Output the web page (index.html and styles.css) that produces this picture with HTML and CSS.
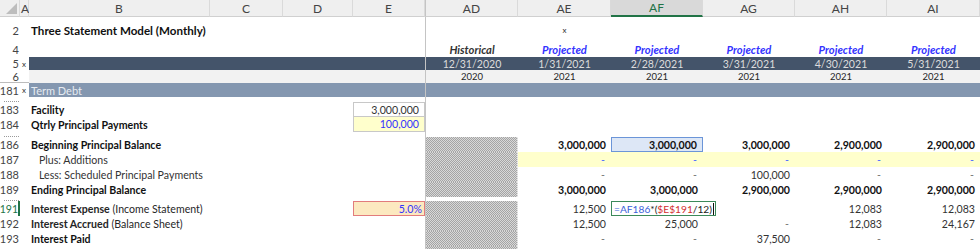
FILE: index.html
```html
<!DOCTYPE html>
<html lang="en">
<head>
  <meta charset="UTF-8" />
  <title>Three Statement Model (Monthly)</title>
  <link rel="stylesheet" href="styles.css">
</head>
<body>

<div class="sheet">

  <!-- Column headers -->
  <div class="row hdr">
    <div class="corner"><span class="tri"></span></div>
    <div class="ch left">A</div>
    <div class="ch">B</div>
    <div class="ch">C</div>
    <div class="ch">D</div>
    <div class="ch">E</div>
    <div class="ch fz">AD</div>
    <div class="ch">AE</div>
    <div class="ch sel">AF</div>
    <div class="ch">AG</div>
    <div class="ch">AH</div>
    <div class="ch">AI</div>
  </div>

  <div class="row r2">
    <div class="rh">2</div>
    <div></div>
    <div class="title">Three Statement Model (Monthly)</div>
    <div></div><div></div><div></div>
    <div class="fz"></div>
    <div class="mid mark">x</div>
    <div></div><div></div><div></div><div></div>
  </div>

  <div class="row r3">
    <div class="rh"></div>
    <div></div><div></div><div></div><div></div><div></div>
    <div class="fz"></div>
    <div></div><div></div><div></div><div></div><div></div>
  </div>

  <div class="row r4">
    <div class="rh">4</div>
    <div></div><div></div><div></div><div></div><div></div>
    <div class="fz mid hist">Historical</div>
    <div class="mid proj">Projected</div>
    <div class="mid proj">Projected</div>
    <div class="mid proj">Projected</div>
    <div class="mid proj">Projected</div>
    <div class="mid proj">Projected</div>
  </div>

  <div class="row r5">
    <div class="rh">5</div>
    <div class="mark">x</div>
    <div class="band"></div><div class="band"></div><div class="band"></div><div class="band"></div>
    <div class="fz band mid date">12/31/2020</div>
    <div class="band mid date">1/31/2021</div>
    <div class="band mid date">2/28/2021</div>
    <div class="band mid date">3/31/2021</div>
    <div class="band mid date">4/30/2021</div>
    <div class="band mid date">5/31/2021</div>
  </div>

  <div class="row r6">
    <div class="rh">6</div>
    <div></div>
    <div class="grey"></div><div class="grey"></div><div class="grey"></div><div class="grey"></div>
    <div class="fz grey mid">2020</div>
    <div class="grey mid">2021</div>
    <div class="grey mid">2021</div>
    <div class="grey mid">2021</div>
    <div class="grey mid">2021</div>
    <div class="grey mid">2021</div>
  </div>

  <div class="row r181">
    <div class="rh">181</div>
    <div class="mark">x</div>
    <div class="section">Term Debt</div>
    <div class="section"></div><div class="section"></div><div class="section"></div>
    <div class="fz section"></div>
    <div class="section"></div><div class="section"></div><div class="section"></div><div class="section"></div><div class="section"></div>
  </div>

  <div class="row thin">
    <div class="rh"><span class="stub"></span></div>
    <div></div><div></div><div></div><div></div><div></div>
    <div class="fz"></div>
    <div></div><div></div><div></div><div></div><div></div>
  </div>

  <div class="row">
    <div class="rh">183</div>
    <div></div>
    <div class="label b">Facility</div>
    <div></div><div></div>
    <div class="num box">3,000,000</div>
    <div class="fz"></div>
    <div></div><div></div><div></div><div></div><div></div>
  </div>

  <div class="row">
    <div class="rh">184</div>
    <div></div>
    <div class="label b">Qtrly Principal Payments</div>
    <div></div><div></div>
    <div class="num box input">100,000</div>
    <div class="fz"></div>
    <div></div><div></div><div></div><div></div><div></div>
  </div>

  <div class="row thin">
    <div class="rh"><span class="stub"></span></div>
    <div></div><div></div><div></div><div></div><div></div>
    <div class="fz"></div>
    <div></div><div></div><div></div><div></div><div></div>
  </div>

  <div class="row">
    <div class="rh">186</div>
    <div></div>
    <div class="label b">Beginning Principal Balance</div>
    <div></div><div></div><div></div>
    <div class="fz hatch"></div>
    <div class="num b">3,000,000</div>
    <div class="num b ref">3,000,000</div>
    <div class="num b">3,000,000</div>
    <div class="num b">2,900,000</div>
    <div class="num b">2,900,000</div>
  </div>

  <div class="row">
    <div class="rh">187</div>
    <div></div>
    <div class="label sub">Plus: Additions</div>
    <div></div><div></div><div></div>
    <div class="fz hatch"></div>
    <div class="num input dash">-</div>
    <div class="num input dash">-</div>
    <div class="num input dash">-</div>
    <div class="num input dash">-</div>
    <div class="num input dash">-</div>
  </div>

  <div class="row">
    <div class="rh">188</div>
    <div></div>
    <div class="label sub">Less: Scheduled Principal Payments</div>
    <div></div><div></div><div></div>
    <div class="fz hatch"></div>
    <div class="num dash">-</div>
    <div class="num dash">-</div>
    <div class="num">100,000</div>
    <div class="num dash">-</div>
    <div class="num dash">-</div>
  </div>

  <div class="row">
    <div class="rh">189</div>
    <div></div>
    <div class="label b">Ending Principal Balance</div>
    <div></div><div></div><div></div>
    <div class="fz hatch"></div>
    <div class="num b">3,000,000</div>
    <div class="num b">3,000,000</div>
    <div class="num b">2,900,000</div>
    <div class="num b">2,900,000</div>
    <div class="num b">2,900,000</div>
  </div>

  <div class="row thin r190">
    <div class="rh"><span class="stub"></span></div>
    <div></div><div></div><div></div><div></div><div></div>
    <div class="fz"></div>
    <div></div><div></div><div></div><div></div><div></div>
  </div>

  <div class="row">
    <div class="rh active">191</div>
    <div></div>
    <div class="label"><b>Interest Expense</b>&nbsp;(Income Statement)</div>
    <div></div><div></div>
    <div class="num rate">5.0%</div>
    <div class="fz hatch"></div>
    <div class="num">12,500</div>
    <div class="editcell">
      <div class="edit"><span class="f-blue">=AF186</span>*(<span class="f-red">$E$191</span>/12)<span class="caret"></span></div>
    </div>
    <div></div>
    <div class="num">12,083</div>
    <div class="num">12,083</div>
  </div>

  <div class="row">
    <div class="rh">192</div>
    <div></div>
    <div class="label"><b>Interest Accrued</b>&nbsp;(Balance Sheet)</div>
    <div></div><div></div><div></div>
    <div class="fz hatch"></div>
    <div class="num">12,500</div>
    <div class="num">25,000</div>
    <div class="num dash">-</div>
    <div class="num">12,083</div>
    <div class="num">24,167</div>
  </div>

  <div class="row">
    <div class="rh">193</div>
    <div></div>
    <div class="label b">Interest Paid</div>
    <div></div><div></div><div></div>
    <div class="fz hatch"></div>
    <div class="num dash">-</div>
    <div class="num dash">-</div>
    <div class="num">37,500</div>
    <div class="num dash">-</div>
    <div class="num dash">-</div>
  </div>

  <div class="row thin">
    <div class="rh"><span class="stub"></span></div>
    <div></div><div></div><div></div><div></div><div></div>
    <div class="fz hatch"></div>
    <div></div><div></div><div></div><div></div><div></div>
  </div>

</div>

</body>
</html>
```

FILE: styles.css
```css
* {
  box-sizing: border-box;
}

body {
  margin: 0;
  font-family: Lato, 'Open Sans', sans-serif;
  font-size: 10.6px;
  color: #262626;
  background: #fff;
}

.sheet {
  width: 980px;
  height: 249px;
  overflow: hidden;
}

.row {
  display: grid;
  grid-template-columns: 20px 9px 181px 73px 70px 72px 93px 93px 92px 92px 92px 93px;
  height: 15px;
}

.row > div {
  display: flex;
  align-items: center;
  white-space: nowrap;
  min-width: 0;
}

/* row heights */
.hdr { height: 17px; }
.r2 { height: 20px; }
.r3 { height: 4px; }
.r4 { height: 16px; }
.r5 { height: 13px; }
.r6 { height: 13px; border-bottom: 1px solid #bcbcbc; }
.r181 { height: 14px; }
.thin { height: 5px; }
.r190 { height: 4px; }
.r3, .thin { overflow: hidden; }

/* headers */
.hdr > div {
  background: #efefef;
  border-bottom: 1px solid #d0d0d0;
  border-right: 1px solid #dadada;
  justify-content: center;
  font-size: 12px;
  color: #444;
}

.hdr .corner {
  position: relative;
  background: #efefef;
}

.corner .tri {
  position: absolute;
  right: 2px;
  bottom: 2px;
  width: 0;
  height: 0;
  border-left: 11px solid transparent;
  border-bottom: 11px solid #bdbdbd;
}

.hdr .left {
  justify-content: flex-start;
  padding-left: 1px;
}

.hdr .sel {
  background: #d9d9d9;
  color: #217346;
  border-bottom: 2px solid #217346;
}

.rh {
  justify-content: flex-end;
  font-size: 11px;
  color: #444;
  padding-right: 1px;
}

/* clipped row number of a collapsed row */
.stub {
  display: block;
  width: 15px;
  height: 1px;
  margin-top: 3px;
  border-top: 1px dotted #9a9a9a;
}

.rh.active {
  color: #217346;
  border-right: 2px solid #217346;
  padding-right: 0;
  font-size: 10.5px;
}

/* freeze pane line */
.fz {
  border-left: 1px solid #c4c4c4;
}

.mid {
  justify-content: center;
}

.mark {
  font-size: 8px;
  color: #333;
  padding-left: 2px;
}

.r2 > div {
  align-items: flex-end;
  padding-bottom: 0;
}

.r2 .mark {
  padding-bottom: 2px;
  padding-left: 0;
}

.title {
  font-size: 11.6px;
  font-weight: bold;
  padding-left: 2px;
  color: #111;
}

.hist, .proj {
  font-weight: bold;
  font-style: italic;
  font-size: 11.2px;
}

.hist { color: #333; }
.proj { color: #3333ff; }

.band {
  background: #44546a;
}

.date {
  color: #dcdcdc;
  font-size: 10.6px;
}

.grey {
  background: #f2f2f2;
  font-size: 9.5px;
}

.section {
  background: #8497b0;
  color: #e6ebf1;
  font-size: 11px;
  padding-left: 2px;
}

.label {
  padding-left: 2px;
  color: #262626;
}

.label b, .b {
  font-weight: bold;
}

.label.b {
  color: #111;
}

.sub {
  padding-left: 10px;
  color: #333;
}

.num {
  justify-content: flex-end;
  padding-right: 5px;
  color: #333;
}

.num.b {
  color: #111;
}

.dash {
  color: #777;
  padding-right: 6px;
}

.box {
  border: 1px solid #c8c8c8;
}

.input {
  background: #ffffcc;
  color: #3333ff;
}

.box.input {
  border-top: none;
}

.input.dash {
  color: #4d6bff;
}

.ref {
  background: #dde7f6;
  border: 1px solid #6b95d8;
}

.rate {
  background: #fce9c0;
  border: 1px solid #e27c7c;
  color: #3333ff;
  padding-right: 2px;
}

.hatch {
  background: repeating-conic-gradient(#a4a4a4 0 25%, #d8d8d8 0 50%) 0 0 / 2px 2px;
  border-right: 1px dotted #ececec;
}

/* in-cell formula editor */
.row > .editcell {
  overflow: visible;
  align-items: stretch;
}

.edit {
  flex-shrink: 0;
  background: #fff;
  border: 1px solid #3c8a5a;
  padding: 0 1px 0 2px;
  display: flex;
  align-items: center;
  color: #222;
  font-size: 10.2px;
  z-index: 1;
}

.f-blue { color: #3b5fd9; }
.f-red { color: #d22f2f; }

.caret {
  display: inline-block;
  width: 1px;
  height: 12px;
  background: #111;
  margin-left: 1px;
}
```
